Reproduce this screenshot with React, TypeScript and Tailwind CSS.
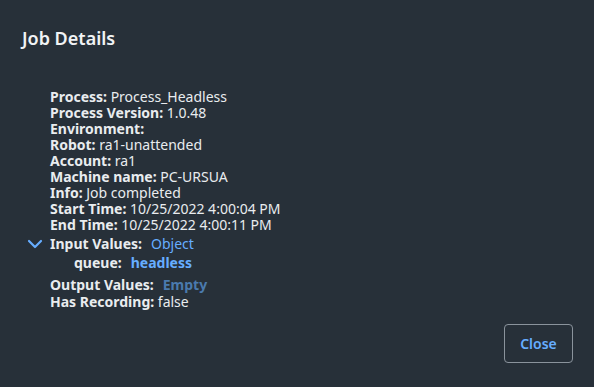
import { ChevronDown } from "lucide-react";

const rows: [string, string][] = [
  ["Process:", "Process_Headless"],
  ["Process Version:", "1.0.48"],
  ["Environment:", ""],
  ["Robot:", "ra1-unattended"],
  ["Account:", "ra1"],
  ["Machine name:", "PC-URSUA"],
  ["Info:", "Job completed"],
  ["Start Time:", "10/25/2022 4:00:04 PM"],
  ["End Time:", "10/25/2022 4:00:11 PM"],
];

export default function App() {
  return (
    <div
      className="w-[594px] h-[387px] bg-[#273039] text-[#e9ecef] flex flex-col"
      style={{ fontFamily: '"Noto Sans", "Open Sans", sans-serif' }}
    >
      <h1 className="px-[22px] pt-[25px] text-[18px] leading-[26px] font-semibold text-[#f1f3f5]">
        Job Details
      </h1>
      <div className="pl-[50px] pt-[38px] text-[14px] leading-[16px]">
        {rows.map(([label, value]) => (
          <div key={label}>
            <span className="font-bold">{label}</span> {value}
          </div>
        ))}
        <div className="relative flex items-center gap-[9px] mt-[1px] h-[20px]">
          <ChevronDown
            className="absolute -left-[27px] -top-[2px] text-[#66adff]"
            size={24}
            strokeWidth={2.2}
          />
          <span className="font-bold">Input Values:</span>
          <span className="text-[#66adff]">Object</span>
        </div>
        <div className="flex items-center gap-[9px] pl-[24px] h-[18px]">
          <span className="font-bold">queue:</span>
          <span className="font-bold text-[#66adff]">headless</span>
        </div>
        <div className="flex items-center gap-[9px] mt-[4px] h-[18px]">
          <span className="font-bold">Output Values:</span>
          <span className="font-bold text-[#4a7aae]">Empty</span>
        </div>
        <div className="h-[16px]">
          <span className="font-bold">Has Recording:</span> false
        </div>
      </div>
      <div className="flex justify-end pr-[21px] pt-[14px]">
        <button
          type="button"
          className="w-[69px] h-[39px] border border-[#8a939c] rounded-[4px] text-[14px] font-semibold text-[#66adff]"
        >
          Close
        </button>
      </div>
    </div>
  );
}
